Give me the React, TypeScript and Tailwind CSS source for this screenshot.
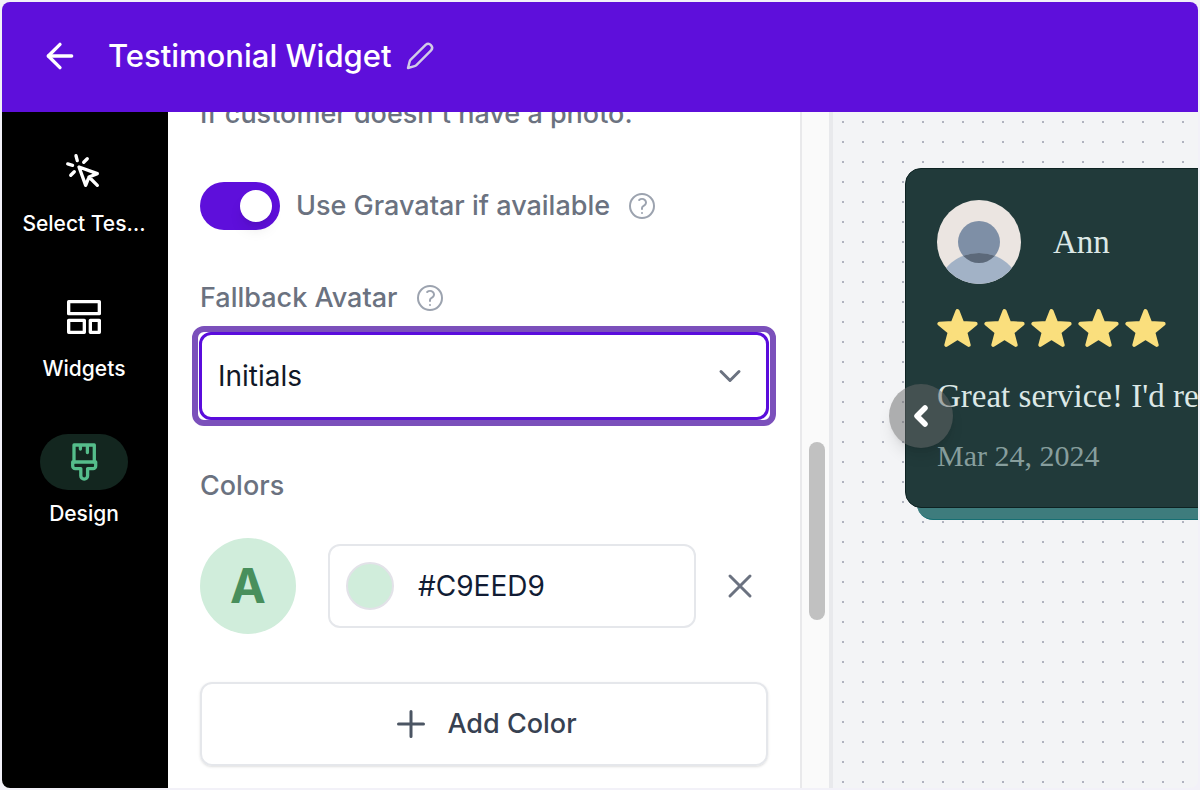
import { ChevronDown, ArrowLeft } from "lucide-react";
import { ReactNode, useState } from "react";
import { HiOutlineCursorClick } from "react-icons/hi";
import {
    HiOutlinePlus,
    HiOutlineQuestionMarkCircle,
    HiOutlineXMark,
} from "react-icons/hi2";

interface NavItemProps {
    label: string;
    icon: ReactNode;
    active?: boolean;
}

function PencilIcon() {
    return (
        <svg
            className="size-8"
            viewBox="0 0 32 32"
            fill="none"
            stroke="currentColor"
            strokeWidth="2.4"
            strokeLinejoin="round"
        >
            <path d="M4 28l1.7-6.6a4 4 0 0 1 1-1.8L21.6 4.9a3.9 3.9 0 0 1 5.5 5.5L12.4 25.2a4 4 0 0 1-1.8 1L4 28z" />
        </svg>
    );
}

function LayoutIcon() {
    return (
        <svg
            className="size-10"
            viewBox="0 0 24 24"
            fill="none"
            stroke="currentColor"
            strokeWidth="2"
            strokeLinejoin="round"
        >
            <path d="M2.8 2.8h18.4V10H2.8zM2.8 14h9.4v7.2H2.8zM15.8 14h5.4v7.2h-5.4z" />
        </svg>
    );
}

function BrushIcon() {
    return (
        <svg
            className="size-10"
            viewBox="0 0 40 40"
            fill="none"
            stroke="currentColor"
            strokeWidth="3.3"
            strokeLinecap="round"
            strokeLinejoin="round"
        >
            <path d="M10 20V3h20.3v17M16.4 3v4M23.4 3v7.5" />
            <path d="M8.7 20h23v4a2.6 2.6 0 0 1-2.6 2.6h-5.5v7.2a3.4 3.4 0 0 1-6.8 0v-7.2h-5.5A2.6 2.6 0 0 1 8.7 24z" />
        </svg>
    );
}

function NavItem({ label, icon, active }: NavItemProps) {
    return (
        <button className="flex flex-col items-center text-white">
            <span
                className={
                    active
                        ? "flex h-14 w-22 items-center justify-center rounded-full bg-[#13261f] text-[#55bd8b]"
                        : "flex h-14 w-22 items-center justify-center"
                }
            >
                {icon}
            </span>
            <span className="mt-2 text-[21px] leading-8 font-medium">
                {label}
            </span>
        </button>
    );
}

function HelpButton() {
    return (
        <button aria-label="Help" className="text-[#9ca3af]">
            <HiOutlineQuestionMarkCircle className="size-8" />
        </button>
    );
}

function Star() {
    return (
        <svg
            className="size-[42px]"
            viewBox="0 0 42 42"
            fill="currentColor"
            stroke="currentColor"
            strokeWidth="4"
            strokeLinejoin="round"
        >
            <path d="M20.5 3l4.7 12 13.4.8-10.3 8.4 3.4 12.7-11.2-7-11.2 7 3.4-12.7L2.4 15.8l13.4-.8z" />
        </svg>
    );
}

function CustomerAvatar() {
    return (
        <svg className="size-21 rounded-full" viewBox="0 0 84 84">
            <clipPath id="head">
                <circle cx="42" cy="42" r="21" />
            </clipPath>
            <rect width="84" height="84" fill="#ebe5e1" />
            <circle cx="42" cy="42" r="21" fill="#7e8fa6" />
            <circle cx="42" cy="97" r="44" fill="#a2b2c6" />
            <circle
                cx="42"
                cy="97"
                r="44"
                fill="#5c697a"
                clipPath="url(#head)"
            />
        </svg>
    );
}

function DesignPanel() {
    const [useGravatar, setUseGravatar] = useState(true);
    const [fallback, setFallback] = useState("Initials");
    const [color, setColor] = useState("#C9EED9");

    return (
        <section className="flex w-[634px] shrink-0 flex-col overflow-hidden border-r-2 border-[#e9e9eb] bg-white px-8 text-[27px] leading-10 font-medium text-[#6b7280]">
            <p className="-mt-[18px] shrink-0">
                If customer doesn't have a photo.
            </p>
            <div className="mt-12 flex h-12 shrink-0 items-center gap-4">
                <label className="flex items-center gap-4">
                    <input
                        type="checkbox"
                        role="switch"
                        className="peer sr-only"
                        checked={useGravatar}
                        onChange={(e) => setUseGravatar(e.target.checked)}
                    />
                    <span className="flex h-12 w-20 items-center rounded-full bg-gray-300 px-2 peer-checked:justify-end peer-checked:bg-[#5e0fdb]">
                        <span className="size-8 rounded-full bg-white shadow-lg" />
                    </span>
                    Use Gravatar if available
                </label>
                <HelpButton />
            </div>
            <div className="mt-12 flex shrink-0 items-center gap-4">
                <label htmlFor="fallback">Fallback Avatar</label>
                <HelpButton />
            </div>
            <div className="relative -mx-2 mt-2 h-25 shrink-0 rounded-xl border-6 border-[#7b50bb] px-px">
                <select
                    id="fallback"
                    className="size-full appearance-none rounded-xl border-3 border-[#5a0cdc] bg-white px-4 text-[28px] font-normal text-[#111827] outline-none"
                    value={fallback}
                    onChange={(e) => setFallback(e.target.value)}
                >
                    <option>Initials</option>
                    <option>Silhouette</option>
                </select>
                <ChevronDown className="pointer-events-none absolute top-[26px] right-[22px] size-9 text-[#6b7280]" />
            </div>
            <h2 className="mt-10 shrink-0">Colors</h2>
            <div className="mt-8 flex shrink-0 items-center">
                <div className="flex size-24 items-center justify-center rounded-full bg-[#d0eddb] text-5xl font-bold text-[#488f5c]">
                    A
                </div>
                <div className="ml-8 flex h-21 min-w-0 flex-1 items-center gap-6 rounded-xl border-2 border-[#e5e7eb] px-4">
                    <button
                        aria-label="Pick color"
                        className="size-12 shrink-0 rounded-full border-2 border-[#e2e2e8] bg-[#d0eddb]"
                    />
                    <input
                        aria-label="Color value"
                        className="min-w-0 flex-1 text-[28px] font-normal text-[#111c34] outline-none"
                        value={color}
                        onChange={(e) => setColor(e.target.value)}
                    />
                </div>
                <button
                    aria-label="Remove color"
                    className="mr-2 ml-6 text-[#6b7280]"
                >
                    <HiOutlineXMark className="size-10" strokeWidth={1.8} />
                </button>
            </div>
            <button className="mt-12 flex h-21 shrink-0 items-center justify-center gap-4 rounded-xl border-2 border-[#e5e7eb] text-[#374151] shadow-sm">
                <HiOutlinePlus
                    className="size-10 text-[#4b5563]"
                    strokeWidth={1.8}
                />
                Add Color
            </button>
        </section>
    );
}

function Preview() {
    return (
        <main className="min-w-0 flex-1 overflow-hidden bg-[#f3f4f6] bg-[radial-gradient(#b0b3bf_1px,transparent_1px)] bg-[size:20px_20px] pt-14 pl-18">
            <div className="relative w-[640px] font-['Liberation_Serif',serif]">
                <div className="absolute inset-x-3 top-3 -bottom-3 rounded-2xl border-b border-[#176f73] bg-[#3e7c7d]" />
                <article className="relative rounded-2xl border border-[#0d2222] bg-[#213a3a] px-[31px] pt-[31px] pb-[29px] text-[#dce8e6]">
                    <div className="flex items-center gap-8">
                        <CustomerAvatar />
                        <h3 className="text-[33px] leading-10">Ann</h3>
                    </div>
                    <div className="mt-6 flex gap-[5px] text-[#fadf7d]">
                        <Star />
                        <Star />
                        <Star />
                        <Star />
                        <Star />
                    </div>
                    <p className="mt-[26px] text-[33px] leading-10">
                        Great service! I'd recommend it
                    </p>
                    <p className="mt-5 mb-0.5 text-[30px] leading-10 text-[#879e9d]">
                        Mar 24, 2024
                    </p>
                </article>
                <button
                    aria-label="Previous"
                    className="absolute top-54 -left-4 flex size-16 items-center justify-center rounded-full bg-[#686868]/50 text-white shadow-lg"
                >
                    <svg
                        className="size-8"
                        viewBox="0 0 32 32"
                        fill="none"
                        stroke="currentColor"
                        strokeWidth="5.5"
                        strokeLinecap="round"
                        strokeLinejoin="round"
                    >
                        <path d="M20 8l-8 8 8 8" />
                    </svg>
                </button>
            </div>
        </main>
    );
}

function App() {
    return (
        <div className="h-screen bg-[#f2f1f8] p-0.5 font-['Inter',sans-serif]">
            <div className="flex h-full flex-col overflow-hidden rounded-lg">
                <header className="flex h-[110px] shrink-0 items-center bg-[#5e0fdb] pb-0.5 pl-[38px] text-white">
                    <button aria-label="Back">
                        <ArrowLeft className="size-10" />
                    </button>
                    <h1 className="ml-7 text-[31px] font-medium">
                        Testimonial Widget
                    </h1>
                    <button
                        aria-label="Rename"
                        className="ml-3 text-[#d2cbe6]"
                    >
                        <PencilIcon />
                    </button>
                </header>
                <div className="flex min-h-0 flex-1">
                    <nav className="flex w-[166px] shrink-0 flex-col gap-[49px] bg-black pt-8 pr-0.5">
                        <NavItem
                            label="Select Tes…"
                            icon={<HiOutlineCursorClick className="size-10" />}
                        />
                        <NavItem label="Widgets" icon={<LayoutIcon />} />
                        <NavItem label="Design" icon={<BrushIcon />} active />
                    </nav>
                    <DesignPanel />
                    <div className="w-[31px] shrink-0 border-r-4 border-[#e8e9ec] bg-[#fafafa] pt-[330px] pl-[7px]">
                        <div className="h-[178px] w-4 rounded-full bg-[#c1c1c1]" />
                    </div>
                    <Preview />
                </div>
            </div>
        </div>
    );
}

export default App;
